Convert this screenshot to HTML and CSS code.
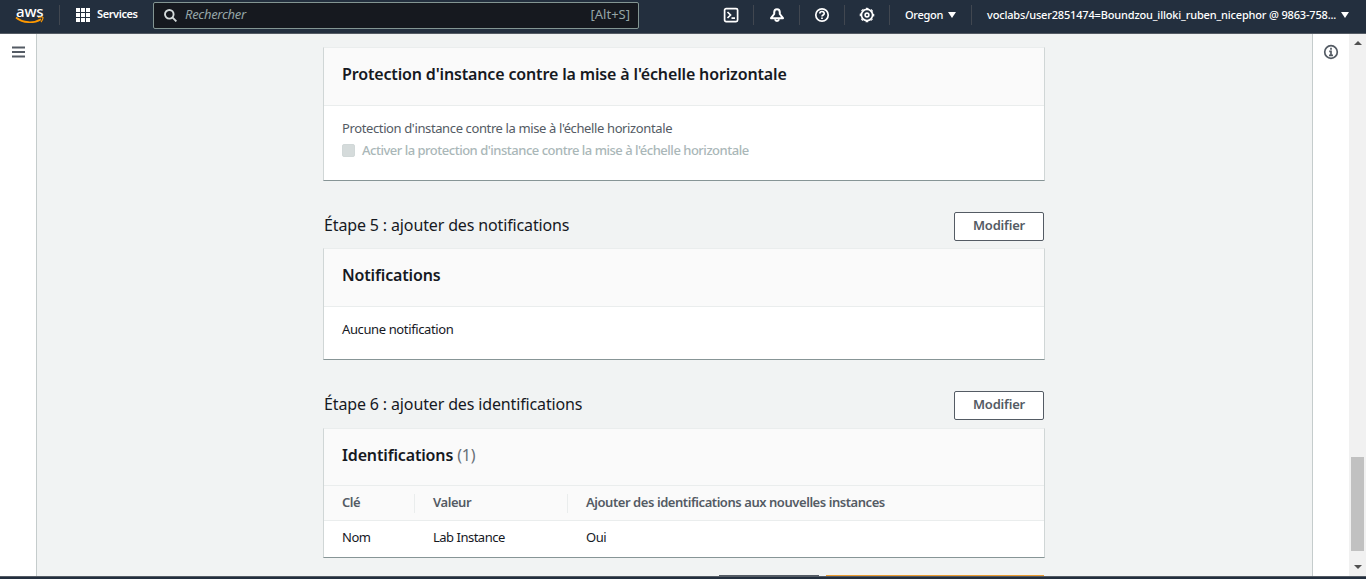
FILE: index.html
```html
<!DOCTYPE html>
<html lang="fr">
<head>
<meta charset="utf-8">
<title>Groupe Auto Scaling</title>
<link rel="stylesheet" href="styles.css">
</head>
<body>
<header class="topbar">
  <div class="logo">
    <span class="logo-text">aws</span>
    <svg class="smile" width="30" height="8" viewBox="0 0 30 8" fill="none" stroke="#f90"><path d="M1 1.500C8 7.500 19 7.500 26 3.200" stroke-width="1.700"/><path d="M23 1.500Q28.500.300 28 2 27.700 4.300 26 6" stroke-width="1.200"/></svg>
  </div>
  <i class="sep sep-logo"></i>
  <svg class="grid-icon" width="14" height="14" viewBox="0 0 14 14" fill="#fff"><path d="M0 0h4v4H0zM5 0h4v4H5zM10 0h4v4h-4zM0 5h4v4H0zM5 5h4v4H5zM10 5h4v4h-4zM0 10h4v4H0zM5 10h4v4H5zM10 10h4v4h-4z"/></svg>
  <span class="services">Services</span>
  <div class="search">
    <svg width="13" height="13" viewBox="0 0 13 13" fill="none" stroke="#d5dbdb" stroke-width="1.900"><circle cx="5.300" cy="5.300" r="4.300"/><path d="M8.400 8.400l4 4"/></svg>
    <span class="placeholder">Rechercher</span>
    <span class="shortcut">[Alt+S]</span>
  </div>
  <nav class="tools">
    <span class="tool tool-shell"><svg width="16" height="16" viewBox="0 0 16 16" fill="none" stroke="#fff" stroke-width="1.700"><rect x="1.600" y="1.600" width="13" height="13" rx="1.500"/><path d="M4.500 5l3 3-3 3M8.500 11.200h3.500"/></svg></span>
    <span class="tool tool-bell"><svg width="16" height="16" viewBox="0 0 16 16" fill="none" stroke="#fff" stroke-width="2" stroke-linejoin="round"><path d="M8 2.200C5.800 2.200 5.200 4 5.200 5.500V7L2 11.200h12L10.800 7V5.500C10.800 4 10.200 2.200 8 2.200z"/><path d="M6 12.300c.5 2.200 3.500 2.200 4 0"/></svg></span>
    <span class="tool tool-help"><svg width="16" height="16" viewBox="0 0 16 16" fill="none" stroke="#fff" stroke-width="1.700"><circle cx="8" cy="8" r="6.200"/><path d="M5.800 6.600C5.800 3.800 10.200 3.900 10.200 6.400 10.200 8 8 7.900 8 9.600M8 10.400v1.700"/></svg></span>
    <span class="tool tool-gear"><svg width="16" height="16" viewBox="0 0 16 16" fill="none" stroke="#fff"><circle cx="8" cy="8" r="5.600" stroke-width="1.700"/><circle cx="8" cy="8" r="6.700" stroke-width="1.200" stroke-dasharray="2.630 2.630" stroke-dashoffset="1.310"/><circle cx="8" cy="8" r="1.900" stroke-width="1.600"/></svg></span>
    <span class="region">Oregon<i class="caret"></i></span>
    <span class="account"><span class="account-name">voclabs/user2851474=Boundzou_illoki_ruben_nicephor @ 9863-758...</span><i class="caret"></i></span>
  </nav>
</header>
<div class="shell">
  <aside class="left-rail"><svg width="13" height="12" viewBox="0 0 13 12" stroke="#545b64" stroke-width="1.800"><path d="M0 1.500h13M0 6h13M0 10.500h13"/></svg></aside>
  <main class="content">
    <section class="card card-protection">
      <h2 class="card-head">Protection d'instance contre la mise à l'échelle horizontale</h2>
      <div class="card-body">
        <div class="field-label">Protection d'instance contre la mise à l'échelle horizontale</div>
        <label class="check"><i class="box"></i><span class="check-text">Activer la protection d'instance contre la mise à l'échelle horizontale</span></label>
      </div>
    </section>
    <div class="step step-five"><h1 class="step-title">Étape 5 : ajouter des notifications</h1><button class="btn">Modifier</button></div>
    <section class="card card-notif">
      <h2 class="card-head">Notifications</h2>
      <div class="card-body"><div class="empty">Aucune notification</div></div>
    </section>
    <div class="step step-six"><h1 class="step-title">Étape 6 : ajouter des identifications</h1><button class="btn">Modifier</button></div>
    <section class="card card-tags">
      <h2 class="card-head">Identifications <span class="count">(1)</span></h2>
      <div class="row row-head"><span class="cell">Clé</span><span class="cell">Valeur</span><span class="cell cell-long">Ajouter des identifications aux nouvelles instances</span></div>
      <div class="row"><span class="cell">Nom</span><span class="cell">Lab Instance</span><span class="cell">Oui</span></div>
    </section>
    <div class="actions"><i class="action-back"></i><i class="action-create"></i></div>
  </main>
  <aside class="right-rail"><svg width="16" height="16" viewBox="0 0 16 16" fill="none" stroke="#545b64"><circle cx="8" cy="8" r="6.300" stroke-width="1.700"/><path d="M8 3.800v2M6.200 7.300H8v4M6 11.300h4" stroke-width="1.700"/></svg></aside>
  <div class="scrollbar"><i class="arrow-up"></i><i class="thumb"></i><i class="arrow-down"></i></div>
</div>
<footer class="footer"></footer>
</body>
</html>
```
FILE: styles.css
```css
* { box-sizing: border-box; }
body {
  margin: 0;
  height: 579px;
  overflow: hidden;
  display: flex;
  flex-direction: column;
  font-family: "Noto Sans", "Open Sans", sans-serif;
  font-size: 13px;
  letter-spacing: -.38px;
  font-variant-ligatures: common-ligatures;
  color: #16191f;
}
h1, h2 { margin: 0; }
svg, i { display: block; flex: none; }
span, h1, h2, div { white-space: nowrap; }

.topbar {
  height: 34px;
  flex: none;
  display: flex;
  align-items: flex-start;
  background: #232f3e;
  border-bottom: 1px solid #545b64;
  color: #fff;
  font-size: 11px;
  letter-spacing: 0;
  font-weight: 500;
  line-height: 20px;
}
.logo { width: 30px; margin-left: 15px; display: flex; flex-direction: column; }
.logo-text { height: 16px; padding-left: 1px; font-size: 15px; line-height: 22px; letter-spacing: -.2px; }
.sep { width: 1px; height: 20px; background: #414750; }
.sep-logo { margin: 5px 0 0 14px; }
.grid-icon { margin: 8px 0 0 16px; }
.services { width: 42px; margin: 4px 0 0 7px; font-weight: 600; letter-spacing: -.4px; }
.search {
  width: 486px;
  height: 27px;
  margin: 2px 0 0 14px;
  padding: 0 8px 3px 10px;
  display: flex;
  align-items: center;
  background: #16191f;
  border: 1px solid #839592;
  border-radius: 2px;
  color: #95a5a6;
  font-size: 13px;
  font-weight: 400;
}
.search svg { margin-top: 3px; }
.placeholder { margin-left: 8px; font-style: italic; letter-spacing: -.3px; }
.shortcut { margin-left: auto; font-size: 13px; letter-spacing: 0; }
.tools { display: flex; flex: 1; padding-top: 5px; }
.tool { width: 46px; height: 20px; padding-top: 2px; display: flex; justify-content: center; border-right: 1px solid #414750; }
.tool-shell { margin-left: 69px; }
.tool-help, .tool-gear { width: 45px; }
.region { width: 82px; padding-left: 15px; display: flex; line-height: 19px; letter-spacing: -.3px; border-right: 1px solid #414750; }
.caret { border: 4px solid transparent; border-top: 6px solid #fff; border-bottom: 0; margin: 7px 0 0 5px; }
.account { display: flex; line-height: 19px; padding-left: 15px; }
.account-name { width: 349px; letter-spacing: -.17px; }

.shell { flex: 1; display: flex; min-height: 0; }
.left-rail { width: 37px; padding: 12px 0 0 12px; border-right: 1px solid #c5cccc; background: #fff; }
.content { flex: 1; background: #f1f3f3; padding: 13px 0 0 286px; }
.right-rail { width: 37px; padding: 10px 0 0 10px; border-left: 1px solid #c5cccc; background: #fff; }
.scrollbar { width: 17px; background: #f1f1f1; display: flex; flex-direction: column; align-items: center; }
.arrow-up { margin-top: 7px; border: 4px solid transparent; border-bottom-color: #505050; border-top: 0; }
.thumb { width: 13px; height: 94px; margin-top: 412px; background: #c1c1c1; }
.arrow-down { margin-top: 14px; border: 4px solid transparent; border-top-color: #505050; border-bottom: 0; }

.card { width: 722px; background: #fff; border: 1px solid #d0d6d6; border-top-color: #eaeded; border-bottom-color: #879596; }
.card-head {
  height: 58px;
  padding: 0 18px;
  background: #fafafa;
  border-bottom: 1px solid #eaeded;
  font-size: 16px;
  font-weight: 600;
  letter-spacing: -.15px;
  line-height: 52px;
}
.card-protection { height: 134px; }
.card-notif { height: 112px; }
.card-tags { height: 130px; }
.card-tags .card-head { height: 57px; }
.card-body { padding: 12px 18px; }
.field-label { line-height: 20px; color: #545b64; }
.check { display: flex; align-items: center; margin-top: 2px; line-height: 20px; color: #aab7b8; font-weight: 500; letter-spacing: -.49px; }
.box { width: 13px; height: 13px; margin: 1px 7px 0 0; border: 1px solid #d1d8d8; border-radius: 2px; background: #d5dbdb; }
.empty { line-height: 20px; }
.step { width: 721px; padding-left: 1px; height: 29px; display: flex; justify-content: space-between; }
.step-five { margin: 31px 0 7px; }
.step-six { margin: 31px 0 8px; }
.step-title { font-size: 16px; font-weight: 400; line-height: 26px; letter-spacing: -.14px; }
.btn {
  width: 90px;
  height: 29px;
  padding: 0 0 3px;
  background: #fff;
  border: 1px solid #545b64;
  border-radius: 2px;
  color: #545b64;
  font: 600 13px "Noto Sans", sans-serif;
  letter-spacing: -.2px;
}
.count { color: #687078; font-weight: 400; }
.row { display: grid; grid-template-columns: 91px 153px 1fr; height: 36px; line-height: 33px; letter-spacing: -.5px; }
.row-head { height: 35px; background: #fafafa; border-bottom: 1px solid #eaeded; color: #545b64; font-weight: 600; letter-spacing: -.44px; align-items: center; }
.cell { padding-left: 18px; }
.row-head .cell { height: 19px; line-height: 17px; border-right: 1px solid #eaeded; }
.row-head .cell-long { border-right: 0; }
.actions { display: flex; gap: 7px; margin: 17px 0 0 396px; }
.action-back { width: 100px; height: 1px; background: #545b64; }
.action-create { width: 218px; height: 1px; background: #ec9b2f; }
.footer { height: 3px; flex: none; background: #232f3e; border-top: 1px solid #545b64; }
```
